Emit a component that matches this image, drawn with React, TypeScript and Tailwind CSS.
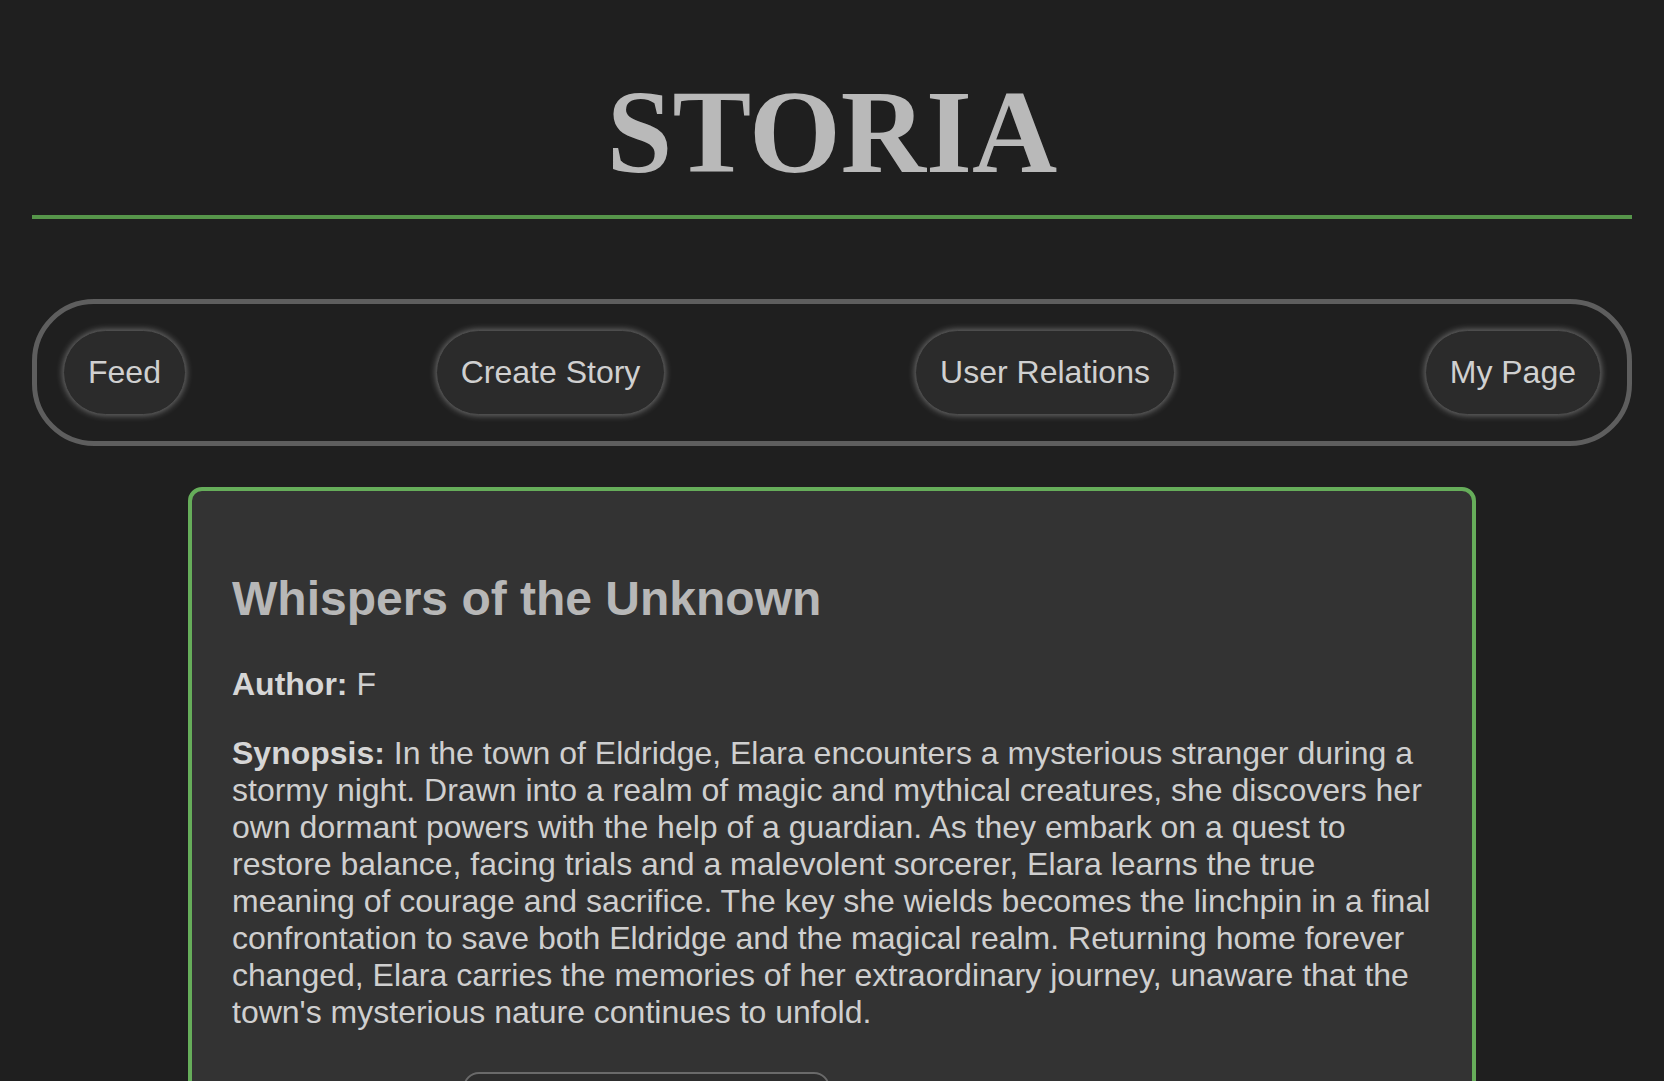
import React from "react";

const navItems = ["Feed", "Create Story", "User Relations", "My Page"];

export default function App() {
  return (
    <div
      className="min-h-screen bg-[#1f1f1f] px-8 pb-20"
      style={{ fontFamily: '"Liberation Sans", Arial, Helvetica, sans-serif' }}
    >
      <h1
        className="pt-[65px] pb-[14px] border-b-4 border-[#56954a] text-center text-[118px] font-bold leading-[normal] text-[#b9b9b9]"
        style={{ fontFamily: '"Liberation Serif", "Times New Roman", serif' }}
      >
        STORIA
      </h1>

      <nav className="mt-[80px] flex items-center justify-between rounded-[62px] border-[5px] border-[#5e5e5e] p-[26px]">
        {navItems.map((item) => (
          <button
            key={item}
            className="rounded-full border border-[#4d4d4d] bg-[#2b2b2b] px-6 py-[23px] text-[32px] leading-[normal] text-[#d0d0d0] shadow-[0_0_7px_rgba(255,255,255,0.4)]"
          >
            {item}
          </button>
        ))}
      </nav>

      <div className="mx-auto mt-[41px] w-[1288px] rounded-[14px] border-4 border-[#66ad5a] bg-[#333333] px-10 pt-10 pb-10 text-[32px] leading-[normal] text-[#cfcfcf]">
        <h2 className="mt-[40px] mb-[40px] text-[48px] font-bold leading-[normal] text-[#b7b7b7]">
          Whispers of the Unknown
        </h2>
        <p className="leading-[normal]">
          <strong className="font-bold text-[#d6d6d6]">Author:</strong> F
        </p>
        <p className="mt-8 mr-[-12px] leading-[normal]">
          <strong className="font-bold text-[#d6d6d6]">Synopsis:</strong> In the town of Eldridge, Elara
          encounters a mysterious stranger during a stormy night. Drawn into a realm of magic and mythical
          creatures, she discovers her own dormant powers with the help of a guardian. As they embark on a
          quest to restore balance, facing trials and a malevolent sorcerer, Elara learns the true meaning of
          courage and sacrifice. The key she wields becomes the linchpin in a final confrontation to save both
          Eldridge and the magical realm. Returning home forever changed, Elara carries the memories of her
          extraordinary journey, unaware that the town's mysterious nature continues to unfold.
        </p>
        <div className="mt-[41px] flex">
          <button className="ml-[231px] w-[367px] rounded-[16px] border-2 border-[#6a6a6a] bg-[#2d2d2d] px-6 py-4 text-[32px] leading-[normal] text-[#d0d0d0]">
            Read Story
          </button>
        </div>
      </div>
    </div>
  );
}
